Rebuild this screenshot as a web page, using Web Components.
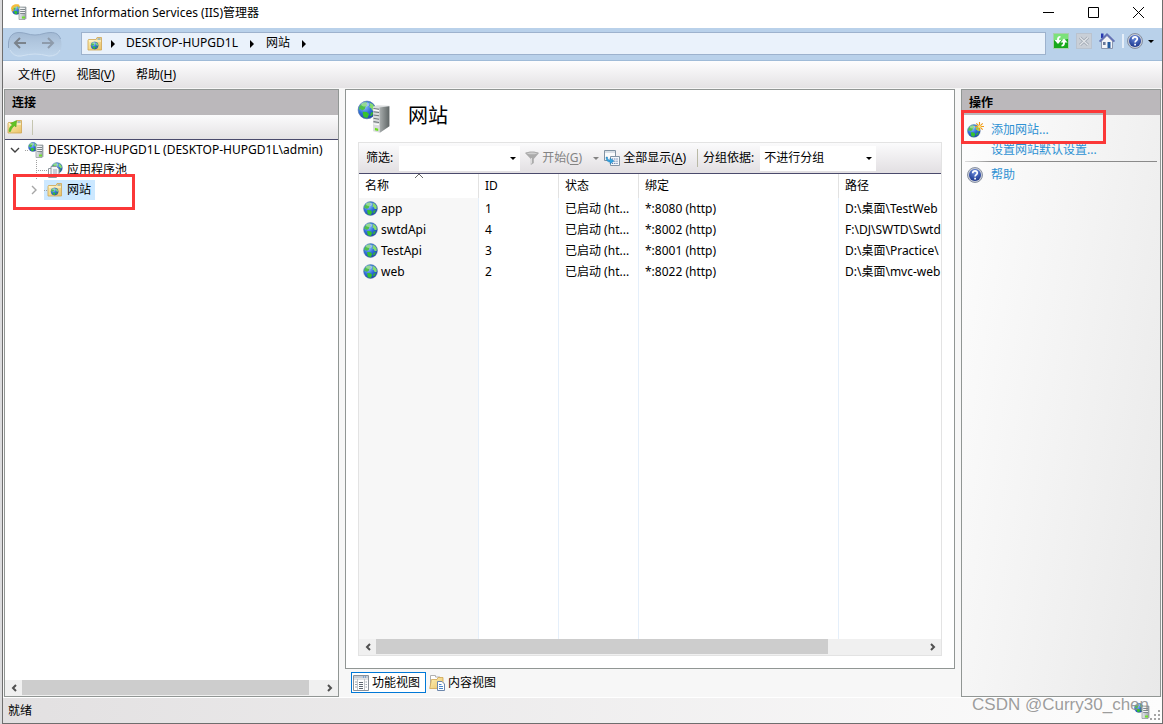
<!DOCTYPE html>
<html lang="zh-CN">
<head>
<meta charset="utf-8">
<title>Internet Information Services (IIS)管理器</title>
<style>
html, body { margin: 0; height: 100%; }
body { font: 12px/20px "Noto Sans", "Noto Sans CJK SC", sans-serif; color: #000; background: #dcdcde; }
</style>
</head>
<body>
<iis-window></iis-window>
<script>
const RESET = `
*, *::before, *::after { box-sizing: border-box; }
button, input, select { font: inherit; color: inherit; margin: 0; padding: 0; border: 0; background: none; border-radius: 0; }
u { text-decoration: underline; text-underline-offset: 2px; }
`;
function define(name, css, html, setup) {
  customElements.define(name, class extends HTMLElement {
    connectedCallback() {
      if (this.shadowRoot) return;
      const t = document.createElement('template');
      t.innerHTML = `<style>${RESET}${css}</style>${typeof html === 'function' ? html(this) : html}`;
      this.attachShadow({ mode: 'open' }).append(t.content.cloneNode(true));
      if (setup) setup(this, this.shadowRoot);
    }
  });
}

/* ---------- icons ---------- */
const GLOBE_DEFS = `<defs><radialGradient id="g" cx=".35" cy=".3" r=".8"><stop offset="0" stop-color="#9ccbff"/><stop offset=".5" stop-color="#2f6fdc"/><stop offset="1" stop-color="#1a3fa0"/></radialGradient>
<linearGradient id="f" x1="0" y1="0" x2="1" y2="1"><stop offset="0" stop-color="#fff3b8"/><stop offset="1" stop-color="#e9c268"/></linearGradient>
<linearGradient id="s" x1="0" x2="1"><stop offset="0" stop-color="#e8ebed"/><stop offset="1" stop-color="#9aa2a7"/></linearGradient>
<linearGradient id="t" x1="0" x2="1"><stop offset="0" stop-color="#a9aeae"/><stop offset="1" stop-color="#5f6666"/></linearGradient>
<radialGradient id="h" cx=".5" cy=".25" r=".8"><stop offset="0" stop-color="#6d8fe0"/><stop offset="1" stop-color="#152f86"/></radialGradient></defs>`;
const globe = (x, y, k) => `<g transform="translate(${x} ${y}) scale(${k})">
<circle cx="8" cy="8" r="7.4" fill="url(#g)" stroke="#4a6f9f" stroke-width=".5"/>
<path d="M3.2 3.3 5 1.9 8.2 1.3 7.4 3 8.6 4 6.8 5.4 6.2 7.2 4 8.4 2.6 7.3 1.4 8.3 1.5 5.6Z" fill="#4fc04a"/>
<path d="M9.8 1.8 12.6 3 14.6 5.7 14.5 8.4 12.4 8.4 11.6 6.6 9.7 5.6 10.8 4.2Z" fill="#86dc6c"/>
<path d="M4.4 9.6 8 9.8 9.8 11.6 8.3 14.8 5.2 14.2 4.7 12Z" fill="#37c22e"/>
<path d="M11.4 10.2 13.8 9.8 12.2 12.8 10.6 13Z" fill="#37b435"/>
<ellipse cx="6.6" cy="3.4" rx="3.4" ry="1.8" fill="#fff" opacity=".4"/></g>`;
const server = `<path d="M8 4 9 3H15V14.5L14 15.5H8Z" fill="url(#s)" stroke="#8a9297" stroke-width=".7"/><path d="M9.2 5.5H14M9.2 7.5H14M9.2 9.5H14" stroke="#6f787e" stroke-width=".8"/><path d="M9.2 4.5H14M9.2 6.5H14M9.2 8.5H14" stroke="#fff" stroke-width=".8"/><rect x="11" y="12.500" width="3" height="2" fill="#71e02b"/>`;
const help = `<circle cx="8" cy="8" r="7.5" fill="#c7ccd6" stroke="#757f92" stroke-width=".8"/><circle cx="8" cy="8" r="6" fill="url(#h)"/><path d="M5.7 6.2C5.8 3.2 10.4 3.3 10.3 6 10.2 7.7 8.1 7.5 8.1 9.6M8.1 10.8V12.6" fill="none" stroke="#fff" stroke-width="1.7"/>`;
const folder = `<path d="M1 4.5 1.5 3.5H9L10 1.5H14.5V14H1Z" fill="url(#f)" stroke="#cfa552" stroke-width=".8"/><path d="M10.500 3H13.500" stroke="#5f9ad6"/><path d="M2 5H14" stroke="#fffbe0"/>`;
const ICONS = {
  app: globe(.5, 1, .62) + `<path d="M0 5C0 1 4-.5 8 .6L9 3 6 2.600C4 2.300 2.600 3.400 2.400 5.800Z" fill="#f5bd3d"/><path d="M0 5.500 3.400 5.500 1.500 8Z" fill="#eeb02f"/>` + server,
  server: globe(0, 0, .62) + server,
  globe: globe(0, 0, 1),
  newsite: globe(0, 2, .86) + `<path d="M12.5 0V9M8 4.5H17M9.3 1.3 15.7 7.7M15.7 1.3 9.3 7.7" stroke="#ef9a1c" stroke-width="1.1"/><circle cx="12.5" cy="4.5" r="1.6" fill="#ffe179"/>`,
  sites: folder + globe(3.600, 5.500, .5),
  up: folder + `<path d="M2 12.500C2 9 3.500 7 5.500 6L3.500 4.500 9.500 1.500 9 8 7.500 6.800C5.500 8 4.500 9.500 3.500 12.500Z" fill="#62c424" stroke="#48a51f" stroke-width=".5"/>`,
  pool: globe(4, 0, .74) + `<path d="M1.5 6.5H9.5V15.5H1.5Z" fill="#fff" stroke="#8f989f"/><path d="M4 4.5H9.5L12 7V13.5H4Z" fill="#f3f6f9" stroke="#8f989f"/><path d="M6 8H10M6 10H10M6 12H10" stroke="#9aa6b4"/>`,
  help,
  refresh: `<rect x=".5" y=".5" width="15" height="15" fill="#17a91b" stroke="#a8cfae"/><path d="M1 1H15V6Q8 8 1 7Z" fill="#7be27a"/><path d="M7.500 3C5 3 4 4.500 4 7H1.500L5 11 8.500 7H6C6 5.500 6.300 5 7.500 4.600Z" fill="#fff"/><path d="M8.500 13.500C11 13.500 12 12 12 9.500H14.500L11 5.500 7.500 9.500H10C10 11 9.700 11.500 8.500 12Z" fill="#fff"/>`,
  stop: `<rect x=".5" y=".5" width="15" height="15" fill="#c9cfd7" stroke="#bac3cf"/><path d="M4 4.5 12 12M12 4.5 4 12" stroke="#a0a8b3" stroke-width="3"/><path d="M4 4.5 12 12M12 4.5 4 12" stroke="#e4e7eb" stroke-width="1.200"/>`,
  home: `<path d="M2.5 8V15.5H13.5V8L8 2.5Z" fill="#f2f3f7" stroke="#8b96ae"/><path d="M2 .5H4.5V5H2Z" fill="#2838b0"/><path d="M.6 8.6 8 1.4 15.4 8.6" fill="none" stroke="#6472b4" stroke-width="2"/><path d="M8.5 9H11.5V15H8.5Z" fill="#245a9e"/><path d="M4 9H6.6V12H4Z" fill="#68789b"/>`,
  filter: `<path d="M1 3C4 1 12 1 15 3L9.8 9V13L6.8 15V9Z" fill="#ababab"/><path d="M2.5 3.4Q8 1.6 13.5 3.4 8 5.2 2.5 3.4" fill="#cfcfcf"/><path d="M7.5 8V13.5" stroke="#ddd"/>`,
  showall: `<path d="M.5 .5H11.5V10.5H.5Z" fill="#fafbfc" stroke="#8192a3"/><path d="M1 2H11" stroke="#b7c2cf"/><path d="M6.5 6.5H15.5V15.5H6.5Z" fill="#f4f7fb" stroke="#8494a5"/><path d="M8 9H14.500M8 11.2H14.500M8 13.4H14.500" stroke="#4d6da0" stroke-dasharray="1.2 1"/><path d="M2 7C2 11 4 12 6 12V14L10 11 6 8V10C4 10 3.5 9 3.5 7Z" fill="#36a5df" stroke="#1b6eae" stroke-width=".4"/>`,
  features: `<path d="M.5 .5H15.5V15.5H.5Z" fill="#fff" stroke="#899098"/><path d="M1 2H15" stroke="#c4ccd6" stroke-width="2"/><path d="M10 2H14" stroke="#3e78bd" stroke-dasharray="1 1"/><path d="M1 4H15M4.5 4V15M11.5 4V15" stroke="#b2b8be" stroke-width=".8"/><path d="M2 7H4M2 9.5H4M2 12H4M12.5 7H14M12.5 9.5H14M12.5 12H14" stroke="#9aa4af"/><path d="M6 7.5H10M6 9.5H10M6 11.5H10M6 13.5H10" stroke="#4c5661" stroke-width=".9"/>`,
  content: `<path d="M1.500 .5H6.500V2H11V12H1.500Z" fill="#fff" stroke="#b0b0b0"/><path d="M.7 13.500 2.500 4.500H8L9 2.500H14V13.500Z" fill="url(#f)" stroke="#cfa552" stroke-width=".8"/><path d="M8.5 6.500H13L15.5 9V15.5H8.5Z" fill="#fff" stroke="#6c87ac"/><path d="M10 9.500H12.5M10 11.500H14M10 13.500H14" stroke="#4c87cc"/>`,
  big: globe(-.3, -.3, .58) + `<path d="M7.3 2.8 9.200 2 15.200 2.300V12.200L10.600 15.400 7.3 14.700Z" fill="#d9dcdd"/><path d="M10.4 3.2 15.200 2.500V12.200L10.6 15.4Z" fill="url(#t)"/><path d="M7.5 3.600 10.200 4M7.5 5.200 10.200 5.600M7.5 6.8 10.200 7.2M7.5 8.4 10.200 8.8M7.5 10 10.200 10.4" stroke="#6f777b" stroke-width=".5"/><path d="M7.5 4.300 10.200 4.700M7.5 11 10.200 11.5" stroke="#fff" stroke-width=".5"/><path d="M8.200 13 9.8 13.4V14.6L8.200 14.200Z" fill="#6de01e"/>`
};
define('iis-icon', `:host { display: block; flex: none; width: 16px; height: 16px; } svg { display: block; width: 100%; height: 100%; overflow: visible; }`,
  el => `<svg viewBox="0 0 16 16" aria-hidden="true">${GLOBE_DEFS}${ICONS[el.getAttribute('name')]}</svg>`);

const ARROWS = {
  down: `<path d="M1 3H7L4 6Z" fill="currentColor"/>`,
  right: `<path d="M2 0V8L6 4Z" fill="currentColor"/>`,
  open: `<path d="M0 2 4 6 8 2" fill="none" stroke="#404040" stroke-width="1.4"/>`,
  closed: `<path d="M2 0 6 4 2 8" fill="none" stroke="#a6a6a6" stroke-width="1.4"/>`,
  prev: `<path d="M6 1 3 4 6 7" fill="none" stroke="#505050" stroke-width="2"/>`,
  next: `<path d="M2 1 5 4 2 7" fill="none" stroke="#505050" stroke-width="2"/>`,
  sort: `<path d="M0 6 4 2 8 6" fill="none" stroke="#666"/>`
};
define('iis-arrow', `:host { display: block; flex: none; width: 8px; height: 8px; } svg { display: block; width: 100%; height: 100%; overflow: visible; }`,
  el => `<svg viewBox="0 0 8 8" aria-hidden="true">${ARROWS[el.getAttribute('dir')]}</svg>`);

/* ---------- title bar ---------- */
define('iis-titlebar', `
:host { display: flex; align-items: center; height: 28px; padding: 0 1px 0 8px; background: #fff; flex: none; }
h1 { font: inherit; margin: 0 auto 0 5px; height: 22px; }
iis-icon { margin-bottom: 4px; }
button { width: 45px; height: 24px; display: grid; place-items: center; align-self: start; }
svg { width: 11px; height: 11px; fill: none; stroke: #000; }`,
`<iis-icon name="app"></iis-icon><h1>Internet Information Services (IIS)管理器</h1>
<button aria-label="最小化"><svg><path d="M0 5.5H11"/></svg></button>
<button aria-label="最大化"><svg><path d="M.5.5H10.5V10.5H.5Z"/></svg></button>
<button aria-label="关闭"><svg><path d="M0 0 11 11M11 0 0 11"/></svg></button>`);

/* ---------- navigation ---------- */
define('iis-navbar', `
:host { display: flex; align-items: start; height: 33px; padding: 3px 7px 0 4px; background: #b9d1ea; border-bottom: 1px solid #9fbbd8; flex: none; }
.history { display: grid; grid-template-columns: 25px 31px; width: 56px; height: 27px; margin-right: 18px; }
.history > svg { grid-area: 1 / 1 / 2 / 3; width: 56px; height: 27px; }
.history button:nth-of-type(1) { grid-area: 1 / 1; }
.history button:nth-of-type(2) { grid-area: 1 / 2; }
nav { flex: 1; display: flex; align-items: center; height: 23px; margin: 1px 7px 0 0; padding-left: 5px; border: 1px solid #9db2cd; background: #eaf2fb; }
nav iis-arrow { margin: 0 10px; }
nav iis-arrow:first-of-type { margin: 0 9px 0 6px; }
a { color: inherit; text-decoration: none; height: 21px; }
.tools { display: flex; align-items: center; gap: 7px; height: 20px; }
.tools button { display: flex; align-items: center; gap: 4px; }
.rule { width: 2px; height: 14px; background: #e6eff9; margin-right: -4px; }`,
`<div class="history"><svg viewBox="0 0 56 27" aria-hidden="true"><defs><linearGradient id="b" x2="0" y2="1"><stop stop-color="#a3bad4"/><stop offset=".4" stop-color="#b0c6de"/><stop offset="1" stop-color="#bfd5eb"/></linearGradient></defs><path d="M12 1.5C19 1.5 21 4 28 4S37 1.5 44 1.5C51 1.5 54.500 6 54.500 13.500S51 25.500 44 25.500C37 25.500 35 23 28 23S19 25.500 12 25.500C5 25.500 1.500 21 1.500 13.500S5 1.500 12 1.500Z" fill="url(#b)"/><path d="M1.500 17V12C2 5 6 1.500 12 1.500 19 1.500 21 4 28 4S37 1.500 44 1.500C49 1.500 52 3.500 53.500 8" fill="none" stroke="#8fa7c4"/><path d="M3 19Q7 26 14 25 22 23 28 23T42 25Q50 25 53 19" fill="none" stroke="#d0e1f2"/></svg>
<button aria-label="后退"><svg width="14" height="12"><path d="M13 6H2M7 1 2 6 7 11" fill="none" stroke="#7b838c" stroke-width="2"/></svg></button>
<button aria-label="前进"><svg width="14" height="12"><path d="M1 6H12M7 1 12 6 7 11" fill="none" stroke="#8e9bab" stroke-width="2"/></svg></button></div>
<nav aria-label="路径"><iis-icon name="sites"></iis-icon><iis-arrow dir="right"></iis-arrow><a href="#server">DESKTOP-HUPGD1L</a><iis-arrow dir="right"></iis-arrow><a href="#sites">网站</a><iis-arrow dir="right"></iis-arrow></nav>
<div class="tools"><button aria-label="刷新"><iis-icon name="refresh"></iis-icon></button><button aria-label="停止"><iis-icon name="stop"></iis-icon></button><button aria-label="主页"><iis-icon name="home"></iis-icon></button><span class="rule"></span><button aria-label="帮助"><iis-icon name="help"></iis-icon><iis-arrow dir="down"></iis-arrow></button></div>`);

define('iis-menubar', `
:host { display: flex; align-items: center; height: 27px; padding-left: 5px; gap: 1px; background: linear-gradient(#fdfdfe, #e4e2e4); flex: none; }
button { height: 26px; padding: 0 10px; }`,
`<button>文件(<u>F</u>)</button><button>视图(<u>V</u>)</button><button>帮助(<u>H</u>)</button>`);

/* ---------- shared pieces ---------- */
define('iis-panel', `
:host { display: flex; flex-direction: column; min-width: 0; border: 1px solid #919694; background: #fff; }
h2 { font: inherit; font-weight: 700; margin: 0; height: 25px; padding: 3px 7px; background: #bbb8bb; flex: none; }`,
el => `<h2>${el.getAttribute('heading')}</h2><slot></slot>`);

define('iis-scrollbar', `
:host { display: flex; height: 16px; background: #f0f0f0; flex: none; }
button { width: 17px; display: grid; place-items: center; }
.track { flex: 1; }
.thumb { height: 15px; background: #cdcdcd; width: var(--thumb); }`,
`<button aria-label="向左滚动"><iis-arrow dir="prev"></iis-arrow></button><div class="track"><div class="thumb"></div></div><button aria-label="向右滚动"><iis-arrow dir="next"></iis-arrow></button>`);

define('iis-highlight', `:host { display: block; position: absolute; border: 3px solid #fb3838; pointer-events: none; z-index: 2; }`, '');

/* ---------- connections ---------- */
define('iis-tree-item', `
:host { display: flex; height: 20px; position: relative; padding-left: var(--indent, 0px); }
.toggle { width: 20px; position: relative; display: grid; place-items: center; }
.leaf::before { content: ""; position: absolute; left: 12px; top: 0; width: 8px; height: 20px;
  background: repeating-linear-gradient(#a0a0a0 0 1px, transparent 1px 2px) 0 0 / 1px 100% no-repeat, repeating-linear-gradient(90deg, #a0a0a0 0 1px, transparent 1px 2px) 0 10px / 100% 1px no-repeat; }
.label { display: flex; align-items: center; gap: 4px; padding: 0 4px 0 3px; position: relative; white-space: nowrap; }
.label::before { content: ""; position: absolute; left: 0; top: 10px; width: 3px; height: 1px; background: repeating-linear-gradient(90deg, #a0a0a0 0 1px, transparent 1px 2px); }
:host([selected]) .label { background: #cce8ff; }`,
el => { const s = el.getAttribute('state');
  return `${s === 'leaf' ? '<span class="toggle leaf"></span>' : `<button class="toggle" aria-label="展开或折叠"><iis-arrow dir="${s}"></iis-arrow></button>`}<span class="label"><iis-icon name="${el.getAttribute('icon')}"></iis-icon><slot></slot></span><slot name="mark"></slot>`; });

define('iis-connections', `
:host { display: contents; }
.bar { display: flex; align-items: center; gap: 9px; height: 25px; padding-left: 2px; border-bottom: 1px solid #4a4a6c; background: linear-gradient(#fbfbfc, #e4e2e4); flex: none; }
.rule { width: 1px; height: 15px; background: #c5c5b0; }
.tree { flex: 1; overflow: hidden; }
.child { --indent: 19px; }
iis-highlight { left: 8px; top: -6px; width: 122px; height: 36px; }
iis-scrollbar { --thumb: 96%; }`,
`<div class="bar"><button aria-label="向上"><iis-icon name="up"></iis-icon></button><span class="rule"></span></div>
<div class="tree"><iis-tree-item icon="server" state="open">DESKTOP-HUPGD1L (DESKTOP-HUPGD1L\\admin)</iis-tree-item>
<iis-tree-item class="child" icon="pool" state="leaf">应用程序池</iis-tree-item>
<iis-tree-item class="child" icon="sites" state="closed" selected>网站<iis-highlight slot="mark"></iis-highlight></iis-tree-item></div>
<iis-scrollbar></iis-scrollbar>`);

/* ---------- feature view ---------- */
define('iis-filterbar', `
:host { display: flex; align-items: center; height: 31px; padding: 0 7px; border-bottom: 1px solid #4a4a6c; background: linear-gradient(#fbfbfc, #e2dfe2); white-space: nowrap; flex: none; }
.combo { display: flex; align-items: center; background: #fff; height: 25px; margin: 0 4px 0 6px; padding-right: 2px; }
.combo input { width: 109px; height: 25px; padding: 0 4px; }
.group { display: grid; align-items: center; background: #fff; width: 116px; height: 25px; margin-left: 6px; }
.group select, .group iis-arrow { grid-area: 1 / 1; }
.group select { appearance: none; height: 25px; padding: 0 4px; }
.group iis-arrow { justify-self: end; margin-right: 3px; pointer-events: none; }
button { display: flex; align-items: center; gap: 2px; height: 25px; }
.combo button { padding: 0 1px; }
.go { color: #838383; }
.more { color: #838383; padding: 0 4px; margin-left: 6px; }
.rule { width: 1px; height: 18px; background: #b9b9a5; margin: 0 5px 0 11px; }
.all { gap: 3px; }`,
`<label for="q">筛选:</label><span class="combo"><input id="q"><button aria-label="历史记录"><iis-arrow dir="down"></iis-arrow></button></span>
<button class="go" disabled><iis-icon name="filter"></iis-icon><span>开始(<u>G</u>)</span></button><button class="more" disabled aria-label="更多"><iis-arrow dir="down"></iis-arrow></button>
<button class="all"><iis-icon name="showall"></iis-icon><span>全部显示(<u>A</u>)</span></button><span class="rule"></span>
<label for="g">分组依据:</label><span class="group"><select id="g"><option>不进行分组</option></select><iis-arrow dir="down"></iis-arrow></span>`);

define('iis-site-list', `
:host { display: block; flex: 1; overflow: hidden; min-height: 0;
  background:
    linear-gradient(#e5effa, #e5effa) 119px 0 / 1px 100% no-repeat,
    linear-gradient(#e5effa, #e5effa) 199px 0 / 1px 100% no-repeat,
    linear-gradient(#e5effa, #e5effa) 279px 0 / 1px 100% no-repeat,
    linear-gradient(#e5effa, #e5effa) 479px 0 / 1px 100% no-repeat,
    linear-gradient(#f7f7f7, #f7f7f7) 0 24px / 119px 100% no-repeat, #fff; }
table { border-collapse: separate; border-spacing: 0; table-layout: fixed; width: 100%; }
th, td { padding: 0 6px; font-weight: 400; text-align: left; white-space: nowrap; overflow: hidden; height: 21px; }
th { height: 24px; background: #fff; border-right: 1px solid #e2e2e2; position: relative; }
th:last-child { border: 0; }
th iis-arrow { position: absolute; left: 56px; top: -2px; }
td:first-child { padding-left: 4px; }
td:nth-child(3) { text-overflow: ellipsis; }
th:last-child, td:last-child { padding-right: 0; }
.name { display: flex; align-items: center; gap: 3px; }
.name iis-icon { width: 15px; height: 15px; margin-bottom: 1px; }
.c1 { width: 120px; } .c2, .c3 { width: 80px; } .c4 { width: 200px; }`,
`<table><colgroup><col class="c1"><col class="c2"><col class="c3"><col class="c4"><col></colgroup>
<thead><tr><th>名称<iis-arrow dir="sort"></iis-arrow></th><th>ID</th><th>状态</th><th>绑定</th><th>路径</th></tr></thead><tbody></tbody></table>`,
(el, root) => {
  const rows = [
    ['app', 1, '*:8080 (http)', 'D:\\桌面\\TestWeb'],
    ['swtdApi', 4, '*:8002 (http)', 'F:\\DJ\\SWTD\\Swtd'],
    ['TestApi', 3, '*:8001 (http)', 'D:\\桌面\\Practice\\'],
    ['web', 2, '*:8022 (http)', 'D:\\桌面\\mvc-web']
  ];
  root.querySelector('tbody').innerHTML = rows.map(r => `<tr><td><span class="name"><iis-icon name="globe"></iis-icon>${r[0]}</span></td><td>${r[1]}</td><td>已启动 (ht...</td><td>${r[2]}</td><td>${r[3]}</td></tr>`).join('');
});

define('iis-workspace', `
:host { display: flex; flex-direction: column; min-width: 0; }
.view { flex: 1; display: flex; flex-direction: column; border: 1px solid #919694; background: #fff; padding: 11px 12px 12px; min-height: 0; }
header { display: flex; gap: 17px; height: 41px; }
header iis-icon { width: 33px; height: 33px; }
h2 { font: inherit; font-size: 20px; line-height: 30px; margin: 0; }
.list { flex: 1; display: flex; flex-direction: column; border: 1px solid #e3e3e3; min-height: 0; }
.tabs { display: flex; height: 28px; padding: 3px 6px; gap: 1px; flex: none; }
.tabs button { display: flex; align-items: center; gap: 3px; height: 21px; padding: 0 5px 0 1px; border: 1px solid transparent; }
.tabs button[aria-selected=true] { background: #fff; border-color: #0078d7; }
iis-scrollbar { --thumb: 82.5%; }`,
`<div class="view"><header><iis-icon name="big"></iis-icon><h2>网站</h2></header>
<div class="list"><iis-filterbar></iis-filterbar><iis-site-list></iis-site-list><iis-scrollbar></iis-scrollbar></div></div>
<div class="tabs" role="tablist"><button role="tab" aria-selected="true"><iis-icon name="features"></iis-icon>功能视图</button><button role="tab" aria-selected="false"><iis-icon name="content"></iis-icon>内容视图</button></div>`);

/* ---------- actions ---------- */
define('iis-actions', `
:host { display: block; flex: 1; padding: 5px 3px 0; background: linear-gradient(100deg, #fdfdfd, #e9e9e9); }
a { display: flex; align-items: center; gap: 8px; height: 20px; padding-left: 2px; color: #2e91d3; text-decoration: none; position: relative; }
a.plain { padding-left: 26px; }
hr { height: 1px; border: 0; margin: 1px 0 3px; background: linear-gradient(90deg, #ddd, #8a8a8a 15%); }
iis-highlight { left: -4px; top: -10px; width: 145px; height: 34px; }`,
`<a href="#add"><iis-icon name="newsite"></iis-icon>添加网站...<iis-highlight></iis-highlight></a><a class="plain" href="#defaults">设置网站默认设置...</a><hr><a href="#help"><iis-icon name="help"></iis-icon>帮助</a>`);

/* ---------- status bar ---------- */
define('iis-statusbar', `
:host { display: flex; align-items: center; height: 26px; padding: 0 2px 0 5px; border-top: 1px solid #fff; background: linear-gradient(90deg, #e2e0e1, #fdfdfd); position: relative; flex: none; }
span { flex: 1; }
svg { width: 10px; height: 10px; align-self: end; margin: 0 0 3px; }
.mark { position: absolute; right: 13px; bottom: 8px; font: 17px/20px "Liberation Sans", sans-serif; color: #8b8b8bd9; }`,
`<span>就绪</span><iis-icon name="server"></iis-icon><svg fill="#a5a5a5" aria-hidden="true"><path d="M8 0h2v2H8zM4 4h2v2H4zM8 4h2v2H8zM0 8h2v2H0zM4 8h2v2H4zM8 8h2v2H8z"/></svg><div class="mark">CSDN @Curry30_chen</div>`);

define('iis-window', `
:host { display: flex; flex-direction: column; height: 100vh; box-sizing: border-box; margin-left: 2px; border: solid #6e6e6e; border-width: 0 1px 1px; background: #f7f7f7; }
main { flex: 1; display: grid; grid-template-columns: 335px minmax(0, 1fr) 200px; gap: 6px; padding: 1px 1px 0; min-height: 0; }`,
`<iis-titlebar></iis-titlebar><iis-navbar></iis-navbar><iis-menubar></iis-menubar>
<main><iis-panel heading="连接"><iis-connections></iis-connections></iis-panel><iis-workspace></iis-workspace><iis-panel heading="操作"><iis-actions></iis-actions></iis-panel></main>
<iis-statusbar></iis-statusbar>`);
</script>
</body>
</html>
